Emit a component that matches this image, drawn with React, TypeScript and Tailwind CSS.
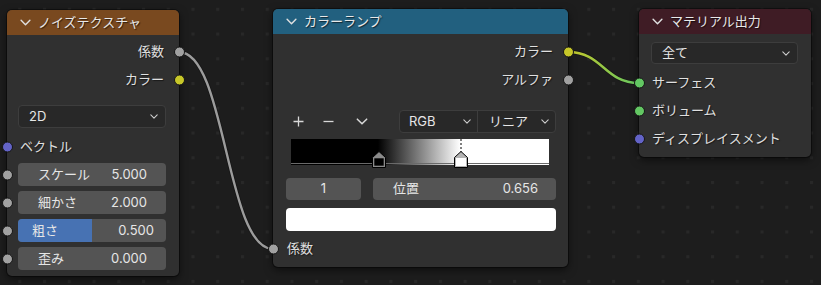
import React from "react";

const FONT = "font-['Inter','Noto_Sans_CJK_JP',sans-serif]";

function Chevron({ className = "" }: { className?: string }) {
  return (
    <svg viewBox="0 0 10 6" className={className} fill="none">
      <path d="M1 1 L5 5 L9 1" stroke="currentColor" strokeWidth="1.3" strokeLinecap="round" strokeLinejoin="round" />
    </svg>
  );
}

function Header({ bg, title }: { bg: string; title: string }) {
  return (
    <div className={`flex h-[25px] items-center gap-[7px] rounded-t-[5px] pl-[13px] text-[13px] text-[#e8e8e8] [text-shadow:1px_1px_1px_rgba(0,0,0,0.6)] ${bg}`}>
      <Chevron className="h-[7px] w-[11px] text-[#e0e0e0]" />
      <span className="leading-none">{title}</span>
    </div>
  );
}

function Socket({ color, side }: { color: string; side: "left" | "right" }) {
  return (
    <span
      className={`absolute top-1/2 h-[11px] w-[11px] -translate-y-1/2 rounded-full border border-[#151515] ${color} ${side === "left" ? "left-[-5.5px]" : "right-[-5.5px]"}`}
    />
  );
}

function OutRow({ label, color, h = "h-[28px]" }: { label: string; color: string; h?: string }) {
  return (
    <div className={`relative flex ${h} items-center justify-end pr-[15px] text-[13px] text-[#e0e0e0] [text-shadow:1px_1px_1px_rgba(0,0,0,0.5)]`}>
      <span>{label}</span>
      <Socket color={color} side="right" />
    </div>
  );
}

function InRow({ label, color, h = "h-[28px]", pl = "pl-[13px]" }: { label: string; color: string; h?: string; pl?: string }) {
  return (
    <div className={`relative flex ${h} items-center ${pl} text-[13px] text-[#e0e0e0] [text-shadow:1px_1px_1px_rgba(0,0,0,0.5)]`}>
      <span>{label}</span>
      <Socket color={color} side="left" />
    </div>
  );
}

function Dropdown({ text, className = "" }: { text: string; className?: string }) {
  return (
    <div className={`flex items-center justify-between rounded-[4px] border border-[#3d3d3d] bg-[#282828] pl-[10px] pr-[7px] text-[13px] text-[#e6e6e6] ${className}`}>
      <span>{text}</span>
      <Chevron className="h-[5px] w-[8px] text-[#d0d0d0]" />
    </div>
  );
}

function Field({ label, value }: { label: string; value: string }) {
  return (
    <div className="relative flex h-[23px]">
      <Socket color="bg-[#a1a1a1]" side="left" />
      <div className="ml-[11px] mr-[13px] flex flex-1 items-center justify-between rounded-[4px] bg-[#545454] pl-[20px] pr-[19px] text-[13px] text-[#e6e6e6]">
        <span>{label}</span>
        <span>{value}</span>
      </div>
    </div>
  );
}

function SliderField({ label, value }: { label: string; value: string }) {
  return (
    <div className="relative flex h-[23px]">
      <Socket color="bg-[#a1a1a1]" side="left" />
      <div className="relative ml-[11px] mr-[13px] flex flex-1 items-center justify-between overflow-hidden rounded-[4px] bg-[#545454] pl-[14px] pr-[12px] text-[13px] text-[#e6e6e6]">
        <div className="absolute inset-y-0 left-0 w-1/2 bg-[#4772b3]" />
        <span className="relative">{label}</span>
        <span className="relative">{value}</span>
      </div>
    </div>
  );
}

function Ramp() {
  return (
    <div className="relative ml-[18px] h-[26px] w-[258px] bg-[linear-gradient(to_right,#000_33.7%,#fff_65.6%)]">
      <div className="absolute bottom-[1px] left-0 right-0 h-[1px] bg-[#6a6a6a]" />
      <svg className="absolute left-0 top-0 overflow-visible" width="258" height="30">
        <line x1="170" y1="0" x2="170" y2="13" stroke="#000" strokeWidth="1" strokeDasharray="2 2" />
        <polygon points="81.5,18.5 88,12.5 94.5,18.5 94.5,28.5 81.5,28.5" fill="#8a8a8a" stroke="#000" strokeWidth="1" />
        <rect x="83" y="19" width="10" height="8" fill="#000" stroke="#8a8a8a" strokeWidth="0.6" />
        <polygon points="163.5,18.5 170,12.5 176.5,18.5 176.5,28.5 163.5,28.5" fill="#b4b4b4" stroke="#000" strokeWidth="1" />
        <rect x="165" y="19" width="10" height="8" fill="#fff" />
      </svg>
    </div>
  );
}

export default function App() {
  const nodeBase = `absolute flex flex-col rounded-[5px] bg-[#303030] shadow-[0_3px_8px_rgba(0,0,0,0.55)] ring-1 ring-black/40 ${FONT}`;
  return (
    <div className={`relative h-[285px] w-[821px] overflow-hidden bg-[#1d1d1d] ${FONT}`}>
      {/* dot grid */}
      <svg className="absolute inset-0" width="821" height="285">
        <defs>
          <pattern id="dots" x="18.3" y="7.8" width="24.74" height="24.74" patternUnits="userSpaceOnUse">
            <rect x="0" y="0" width="3" height="3" fill="#282828" />
          </pattern>
        </defs>
        <rect width="821" height="285" fill="url(#dots)" />
      </svg>

      {/* links */}
      <svg className="absolute inset-0" width="821" height="285">
        <defs>
          <linearGradient id="lg" x1="568" y1="0" x2="639" y2="0" gradientUnits="userSpaceOnUse">
            <stop offset="0" stopColor="#c7c729" />
            <stop offset="1" stopColor="#63c763" />
          </linearGradient>
        </defs>
        <path d="M179 52 C226 52 226 249 273 249" stroke="#111" strokeWidth="4" fill="none" opacity="0.6" />
        <path d="M179 52 C226 52 226 249 273 249" stroke="#9c9c9c" strokeWidth="2.4" fill="none" />
        <path d="M568 52 C603 52 604 83 639 83" stroke="#111" strokeWidth="4" fill="none" opacity="0.6" />
        <path d="M568 52 C603 52 604 83 639 83" stroke="url(#lg)" strokeWidth="2.4" fill="none" />
      </svg>

      {/* Noise texture node */}
      <div className={`${nodeBase} left-[7px] top-[10px] h-[266px] w-[172px]`}>
        <Header bg="bg-[#79491f]" title="ノイズテクスチャ" />
        <div className="flex flex-col pt-[3px]">
          <OutRow label="係数" color="bg-[#a1a1a1]" />
          <OutRow label="カラー" color="bg-[#c7c729]" />
          <Dropdown text="2D" className="ml-[11px] mr-[13px] mt-[11px] h-[23px]" />
          <div className="mt-[7px]">
            <InRow label="ベクトル" color="bg-[#6363c7]" h="h-[24px]" />
          </div>
          <div className="mt-[4px] flex flex-col gap-[5px]">
            <Field label="スケール" value="5.000" />
            <Field label="細かさ" value="2.000" />
            <SliderField label="粗さ" value="0.500" />
            <Field label="歪み" value="0.000" />
          </div>
        </div>
      </div>

      {/* Color ramp node */}
      <div className={`${nodeBase} left-[273px] top-[9px] h-[258px] w-[295px]`}>
        <Header bg="bg-[#22607f]" title="カラーランプ" />
        <div className="flex flex-col pt-[4px]">
          <OutRow label="カラー" color="bg-[#c7c729]" />
          <OutRow label="アルファ" color="bg-[#a1a1a1]" />
          <div className="mt-[16px] flex h-[23px] items-center">
            <div className="flex w-[126px] items-center text-[#d8d8d8]">
              <svg className="ml-[20px]" width="11" height="11" viewBox="0 0 11 11">
                <path d="M5.5 0.5 V10.5 M0.5 5.5 H10.5" stroke="currentColor" strokeWidth="1.3" />
              </svg>
              <svg className="ml-[19px]" width="11" height="11" viewBox="0 0 11 11">
                <path d="M0.5 5.5 H10.5" stroke="currentColor" strokeWidth="1.3" />
              </svg>
              <Chevron className="ml-[22px] h-[7px] w-[12px] text-[#d8d8d8]" />
            </div>
            <div className="flex h-[23px] w-[157px] rounded-[4px] border border-[#3d3d3d] bg-[#282828] text-[13px] text-[#e6e6e6]">
              <div className="flex w-[78px] items-center justify-between border-r border-[#3d3d3d] pl-[9px] pr-[6px]">
                <span>RGB</span>
                <Chevron className="h-[5px] w-[8px] text-[#d0d0d0]" />
              </div>
              <div className="flex flex-1 items-center justify-between pl-[11px] pr-[6px]">
                <span>リニア</span>
                <Chevron className="h-[5px] w-[8px] text-[#d0d0d0]" />
              </div>
            </div>
          </div>
          <div className="mt-[6px]">
            <Ramp />
          </div>
          <div className="ml-[13px] mr-[12px] mt-[13px] flex h-[22px] gap-[12px] text-[13px] text-[#e6e6e6]">
            <div className="flex w-[75px] items-center justify-center rounded-[4px] bg-[#545454]">1</div>
            <div className="flex flex-1 items-center justify-between rounded-[4px] bg-[#545454] pl-[20px] pr-[18px]">
              <span>位置</span>
              <span>0.656</span>
            </div>
          </div>
          <div className="ml-[13px] mr-[12px] mt-[8px] h-[23px] rounded-[4px] bg-white" />
          <div className="mt-[6px]">
            <InRow label="係数" color="bg-[#a1a1a1]" h="h-[24px]" pl="pl-[14px]" />
          </div>
        </div>
      </div>

      {/* Material output node */}
      <div className={`${nodeBase} left-[639px] top-[9px] h-[148px] w-[172px]`}>
        <Header bg="bg-[#3f1c25]" title="マテリアル出力" />
        <div className="flex flex-col">
          <Dropdown text="全て" className="ml-[12px] mr-[13px] mt-[8px] h-[22px]" />
          <div className="mt-[5px] flex flex-col">
            <InRow label="サーフェス" color="bg-[#63c763]" />
            <InRow label="ボリューム" color="bg-[#63c763]" />
            <InRow label="ディスプレイスメント" color="bg-[#6363c7]" />
          </div>
        </div>
      </div>
    </div>
  );
}
